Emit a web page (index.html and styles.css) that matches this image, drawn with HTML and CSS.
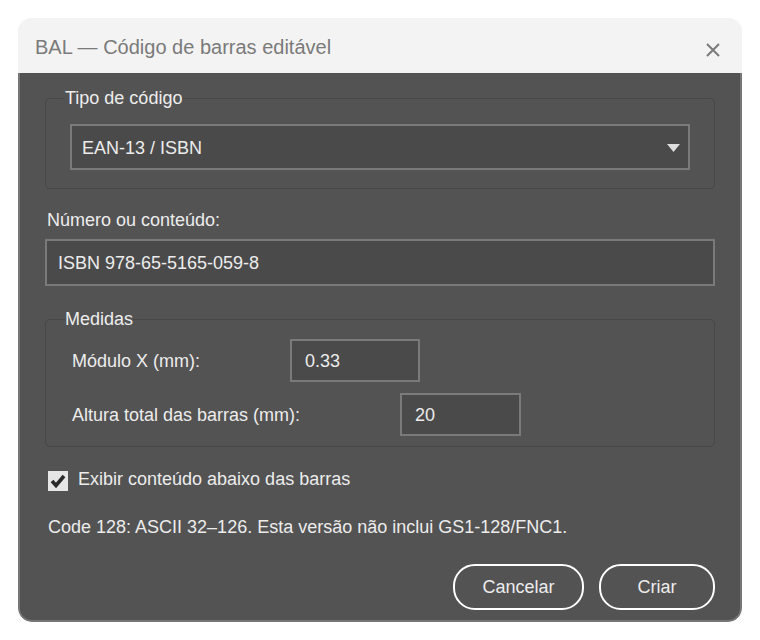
FILE: index.html
```html
<!DOCTYPE html>
<html lang="pt">
<head>
<meta charset="utf-8">
<title>BAL — Código de barras editável</title>
<link rel="stylesheet" href="styles.css">
</head>
<body>
<div class="dialog">
  <div class="titlebar">
    <span class="title">BAL — Código de barras editável</span>
    <svg class="close" width="14" height="14" viewBox="0 0 14 14"><path d="M1 1 L13 13 M13 1 L1 13" stroke="#7a7a7a" stroke-width="2" fill="none"/></svg>
  </div>
  <div class="content">
    <fieldset class="group group-type">
      <legend class="legend">Tipo de código</legend>
      <div class="select">
        <span>EAN-13 / ISBN</span>
        <svg class="arrow" width="13" height="8" viewBox="0 0 13 8"><path d="M0 0 H13 L6.5 8 Z" fill="#dedede"/></svg>
      </div>
    </fieldset>
    <div class="field-label">Número ou conteúdo:</div>
    <div class="textbox wide">ISBN 978-65-5165-059-8</div>
    <fieldset class="group group-measures">
      <legend class="legend">Medidas</legend>
      <div class="row">
        <span class="row-label lbl-x">Módulo X (mm):</span>
        <div class="textbox small">0.33</div>
      </div>
      <div class="row row-second">
        <span class="row-label lbl-h">Altura total das barras (mm):</span>
        <div class="textbox small">20</div>
      </div>
    </fieldset>
    <div class="check-row">
      <span class="checkbox"><svg width="20" height="20" viewBox="0 0 20 20"><path d="M4 10 L8 14.5 L16 5" stroke="#2a2a2a" stroke-width="3.6" fill="none" stroke-linejoin="miter"/></svg></span>
      <span class="check-label">Exibir conteúdo abaixo das barras</span>
    </div>
    <p class="note">Code 128: ASCII 32–126. Esta versão não inclui GS1-128/FNC1.</p>
    <div class="actions">
      <button class="btn btn-cancel">Cancelar</button>
      <button class="btn btn-create">Criar</button>
    </div>
  </div>
</div>
</body>
</html>
```
FILE: styles.css
```css
html, body {
  margin: 0;
  padding: 0;
  background: #ffffff;
}
body {
  font-family: "Liberation Sans", Arial, sans-serif;
  font-size: 18px;
  line-height: 22px;
  color: #ececec;
}
.dialog {
  margin: 18px;
  width: 724px;
  height: 604px;
  border-radius: 14px;
  overflow: hidden;
  display: flex;
  flex-direction: column;
  background: #f3f3f3;
}
.titlebar {
  height: 55px;
  flex: none;
  display: flex;
  align-items: center;
  justify-content: space-between;
  padding: 0 22px 0 17px;
  background: #f3f3f3;
}
.title {
  font-size: 20px;
  color: #7a7a7a;
  margin-top: 3px;
}
.close {
  margin-top: 8px;
}
.content {
  flex: 1;
  display: flex;
  flex-direction: column;
  background: #535353;
  border: 2px solid #767676;
  border-top: none;
  border-radius: 0 0 14px 14px;
  padding: 14px 25px 0 25px;
}
.group {
  margin: 0;
  border: 1px solid #474747;
  border-radius: 5px;
  padding: 0 24px 18px 24px;
}
.legend {
  padding: 0;
  margin-left: -5px;
  line-height: 22px;
  color: #ededed;
}
.select {
  margin-top: 15px;
  height: 46px;
  box-sizing: border-box;
  border: 2px solid #7a7a7a;
  background: #4a4a4a;
  display: flex;
  align-items: center;
  justify-content: space-between;
  padding: 0 8px 0 10px;
}
.select span {
  margin-top: 2px;
}
.arrow {
  margin-top: 2px;
}
.field-label {
  margin-top: 20px;
  padding-left: 2px;
}
.textbox {
  box-sizing: border-box;
  border: 2px solid #7a7a7a;
  background: #4a4a4a;
  display: flex;
  align-items: center;
}
.wide {
  margin-top: 8px;
  height: 47px;
  padding-left: 11px;
  padding-top: 1px;
}
.group-measures {
  margin-top: 22px;
  padding: 0 24px 10px 26px;
}
.group-measures .legend {
  margin-left: -7px;
}
.row {
  display: flex;
  align-items: center;
  margin-top: 9px;
}
.row-second {
  margin-top: 11px;
}
.row-label {
  flex: none;
  padding-top: 1px;
}
.lbl-x {
  width: 218px;
}
.lbl-h {
  width: 328px;
}
.small {
  width: 130px;
  height: 43px;
  padding-left: 13px;
}
.row-second .small {
  width: 121px;
}
.check-row {
  margin-top: 21px;
  display: flex;
  align-items: flex-start;
  gap: 10px;
  padding-left: 3px;
}
.checkbox {
  width: 20px;
  height: 20px;
  margin-top: 3px;
  background: #e6e6e6;
  display: block;
  flex: none;
}
.checkbox svg {
  display: block;
}
.note {
  margin: 25px 0 0 0;
  padding-left: 3px;
}
.actions {
  margin-top: 26px;
  display: flex;
  justify-content: flex-end;
  gap: 15px;
}
.btn {
  font-family: "Liberation Sans", Arial, sans-serif;
  font-size: 18px;
  color: #ededed;
  background: transparent;
  border: 2px solid #ffffff;
  border-radius: 22px;
  height: 46px;
  padding: 0;
  cursor: pointer;
}
.btn-cancel {
  width: 131px;
}
.btn-create {
  width: 116px;
}
```
